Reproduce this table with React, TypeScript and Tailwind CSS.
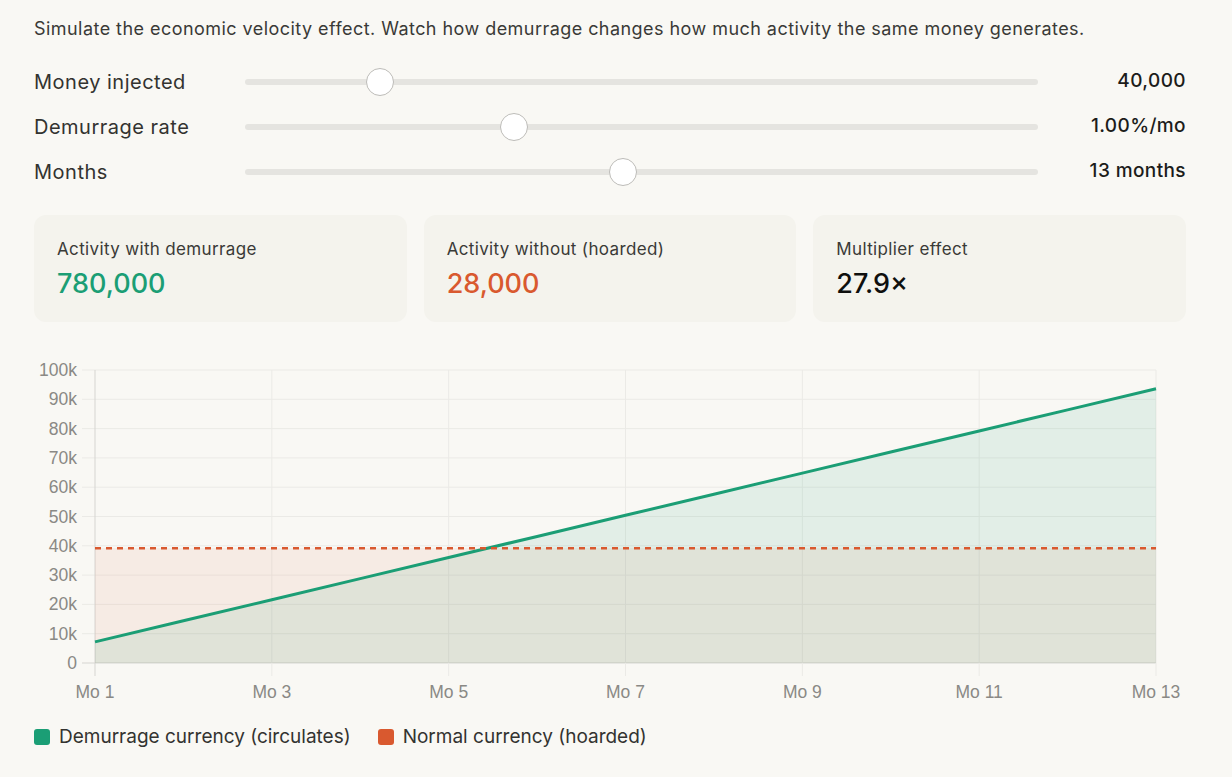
import React from "react";

const GREEN = "#1b9e75";
const RED = "#d9592f";

function Slider({ label, value, pct }: { label: string; value: string; pct: number }) {
  return (
    <div className="flex items-center h-[45px]">
      <div className="w-[211px] text-[20px] tracking-[0.5px] text-[#333330]">{label}</div>
      <div className="relative flex-1 h-[6px] rounded-full bg-[#e5e4e0]">
        <div
          className="absolute top-1/2 w-[28px] h-[28px] -translate-x-1/2 -translate-y-1/2 rounded-full bg-white border border-[#bdbcb8]"
          style={{ left: `${pct}%` }}
        />
      </div>
      <div className="w-[148px] text-right text-[19px] tracking-[0.4px] font-medium text-[#1c1c1a]">{value}</div>
    </div>
  );
}

function Card({ label, value, color }: { label: string; value: string; color: string }) {
  return (
    <div className="flex-1 h-[107px] rounded-[12px] bg-[#f4f3ed] px-[23px] pt-[22px]">
      <div className="text-[17px] tracking-[0.35px] text-[#3a3a37] leading-[24px]">{label}</div>
      <div className="text-[27px] font-medium leading-[40px] mt-[3px]" style={{ color }}>
        {value}
      </div>
    </div>
  );
}

function Chart() {
  const L = 61;
  const R = 1122;
  const T = 15;
  const B = 308;
  const sy = (v: number) => B - (v / 100000) * (B - T);
  const sx = (m: number) => L + ((m - 1) / 12) * (R - L);
  const months = Array.from({ length: 13 }, (_, i) => i + 1);
  const green = months.map((m) => 7200 * m);
  const red = 39200;
  const gPts = months.map((m, i) => `${sx(m)},${sy(green[i])}`).join(" ");
  const gArea = `M${sx(1)},${B} L${months.map((m, i) => `${sx(m)},${sy(green[i])}`).join(" L")} L${sx(13)},${B} Z`;
  const yt = [0, 10, 20, 30, 40, 50, 60, 70, 80, 90, 100];
  const xt = [1, 3, 5, 7, 9, 11, 13];
  return (
    <svg width="1152" height="350" className="block" style={{ fontFamily: '"Liberation Sans", Arial, sans-serif' }}>
      {yt.map((t) => (
        <line key={`gy${t}`} x1={48} x2={R} y1={sy(t * 1000)} y2={sy(t * 1000)} stroke={t === 0 ? "#d6d5d1" : "#ebeae6"} strokeWidth={1} />
      ))}
      {xt.map((m) => (
        <line key={`gx${m}`} x1={sx(m)} x2={sx(m)} y1={T} y2={B + 13} stroke={m === 1 ? "#d6d5d1" : "#ebeae6"} strokeWidth={1} />
      ))}
      <rect x={L} y={sy(red)} width={R - L} height={B - sy(red)} fill="rgba(217,89,47,0.08)" />
      <path d={gArea} fill="rgba(27,158,117,0.1)" />
      <polyline points={gPts} fill="none" stroke={GREEN} strokeWidth={3} strokeLinejoin="round" />
      <line x1={L} x2={R} y1={sy(red)} y2={sy(red)} stroke={RED} strokeWidth={2.5} strokeDasharray="6 5" />
      {yt.map((t) => (
        <text key={`ly${t}`} x={43} y={sy(t * 1000) + 6} textAnchor="end" fontSize={17.5} fill="#8a8985">
          {t === 0 ? "0" : `${t}k`}
        </text>
      ))}
      {xt.map((m) => (
        <text key={`lx${m}`} x={sx(m)} y={343} textAnchor="middle" fontSize={17.5} fill="#8a8985">
          {`Mo ${m}`}
        </text>
      ))}
    </svg>
  );
}

export default function App() {
  return (
    <div
      className="w-[1232px] h-[777px] bg-[#f9f8f4] pl-[34px] pr-[46px] pt-[16px]"
      style={{ fontFamily: 'Inter, "Noto Sans", sans-serif' }}
    >
      <p className="text-[18px] tracking-[0.45px] text-[#3a3a37] leading-[26px]">
        Simulate the economic velocity effect. Watch how demurrage changes how much activity the same money generates.
      </p>
      <div className="mt-[17px]">
        <Slider label="Money injected" value="40,000" pct={17} />
        <Slider label="Demurrage rate" value="1.00%/mo" pct={33.9} />
        <Slider label="Months" value="13 months" pct={47.7} />
      </div>
      <div className="flex gap-[17px] mt-[21px]">
        <Card label="Activity with demurrage" value="780,000" color={GREEN} />
        <Card label="Activity without (hoarded)" value="28,000" color={RED} />
        <Card label="Multiplier effect" value="27.9×" color="#0f0f0e" />
      </div>
      <div className="mt-[33px]">
        <Chart />
      </div>
      <div className="flex items-center gap-[9px] mt-[18px] text-[19px] text-[#333330]">
        <span className="w-[16px] h-[16px] rounded-[3px]" style={{ background: GREEN }} />
        <span>Demurrage currency (circulates)</span>
        <span className="w-[16px] h-[16px] rounded-[3px] ml-[18px]" style={{ background: RED }} />
        <span>Normal currency (hoarded)</span>
      </div>
    </div>
  );
}
